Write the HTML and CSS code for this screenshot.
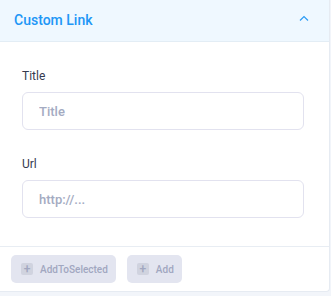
FILE: index.html
```html
<!DOCTYPE html>
<html lang="en">
<head>
    <meta charset="UTF-8">
    <title>Custom Link</title>
    <link rel="stylesheet" href="styles.css">
</head>
<body>

<div class="panel">
    <div class="panel-head">
        <span class="panel-title">Custom Link</span>
        <svg class="chevron" width="10" height="6" viewBox="0 0 10 6">
            <path d="M1 5.5 L5 1.5 L9 5.5" fill="none" stroke="#2b9cf5" stroke-width="1.2"/>
        </svg>
    </div>
    <div class="panel-body">
        <div class="field">
            <label class="field-label">Title</label>
            <input class="field-input" type="text" placeholder="Title">
        </div>
        <div class="field">
            <label class="field-label">Url</label>
            <input class="field-input" type="text" placeholder="http://...">
        </div>
    </div>
    <div class="panel-foot">
        <button class="btn"><span class="btn-icon">+</span>AddToSelected</button>
        <button class="btn"><span class="btn-icon">+</span>Add</button>
    </div>
</div>

</body>
</html>
```

FILE: styles.css
```css
*{
    margin:0;
    padding:0;
    box-sizing: border-box;
}
body{
    background: #f2f5fa;
    font-family: Roboto, "Liberation Sans", sans-serif;
}
.panel{
    width: 330px;
    background: #fff;
    border-right: 1px solid #e6ebf2;
    border-bottom: 1px solid #e6ebf2;
    border-bottom-right-radius: 4px;
}
.panel-head{
    height: 42px;
    background: #eff8ff;
    border-bottom: 1px solid #e3edf5;
    display: flex;
    align-items: center;
    justify-content: space-between;
    padding: 0 20px 0 14px;
}
.panel-title{
    font-size: 14px;
    font-weight: 500;
    color: #2196f6;
    margin-top: -2px;
}
.chevron{
    margin-top: -5px;
}
.panel-body{
    padding: 26px 25px 28px 22px;
    display: flex;
    flex-direction: column;
    gap: 26px;
}
.field{
    display: flex;
    flex-direction: column;
    gap: 8px;
}
.field-label{
    font-size: 12px;
    line-height: 16px;
    color: #353a4f;
}
.field-input{
    height: 38px;
    border: 1px solid #e2e2ef;
    border-radius: 6px;
    padding: 0 16px;
    font-family: inherit;
    font-size: 13px;
    font-weight: 500;
    color: #333;
    outline: none;
}
.field-input::placeholder{
    color: #a4abc2;
}
.panel-foot{
    border-top: 1px solid #e8edf3;
    padding: 8px 11px 8px;
    display: flex;
    gap: 11px;
}
.btn{
    height: 28px;
    border: none;
    border-radius: 5px;
    background: #e3e5f0;
    color: #a1a7c0;
    font-family: inherit;
    font-size: 10px;
    font-weight: 500;
    padding: 0 8px 0 10px;
    display: flex;
    align-items: center;
    gap: 7px;
}
.btn-icon{
    width: 12px;
    height: 12px;
    border-radius: 2px;
    background: #d0d3df;
    color: #a1a7c0;
    font-size: 12px;
    line-height: 12px;
    text-align: center;
}
```
